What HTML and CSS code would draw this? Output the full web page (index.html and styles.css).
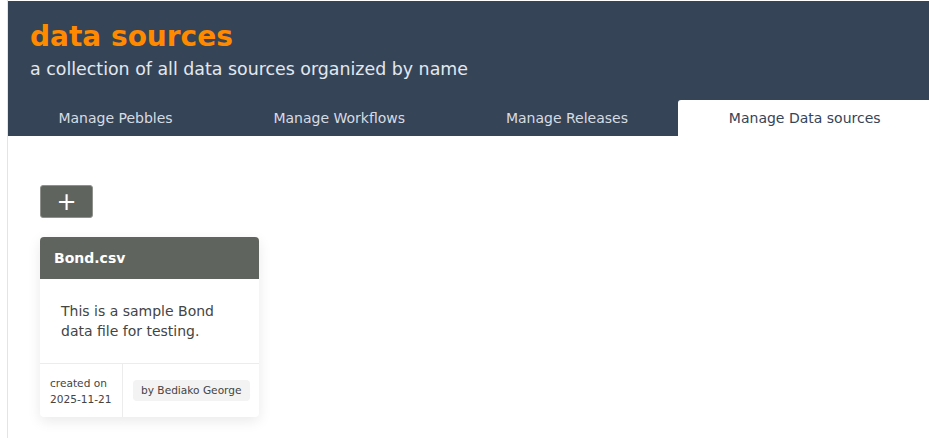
FILE: index.html
```html
<!DOCTYPE html>
<html lang="en">
<head>
    <meta charset="UTF-8">
    <meta name="viewport" content="width=device-width, initial-scale=1.0">
    <title>Data sources</title>
    <link rel="stylesheet" href="styles.css">
</head>
<body>
    <div class="page">
        <div class="header">
            <div class="header-text">
                <h1>data sources</h1>
                <p class="subtitle">a collection of all data sources organized by name</p>
            </div>
            <div class="tabs">
                <div class="tab">Manage Pebbles</div>
                <div class="tab">Manage Workflows</div>
                <div class="tab">Manage Releases</div>
                <div class="tab active">Manage Data sources</div>
            </div>
        </div>

        <div class="content">
            <button class="add-btn">+</button>

            <div class="card">
                <div class="card-title">Bond.csv</div>
                <div class="card-body">This is a sample Bond data file for testing.</div>
                <div class="card-footer">
                    <div class="created">created on<br>2025-11-21</div>
                    <div class="author"><span class="badge">by Bediako George</span></div>
                </div>
            </div>
        </div>
    </div>
</body>
</html>
```

FILE: styles.css
```css
body {
    margin: 0;
    font-family: "DejaVu Sans", Verdana, sans-serif;
    background: white;
    overflow: hidden;
}
.page {
    margin-left: 7px;
    border-left: 1px solid #e4e4e4;
    padding-top: 1px;
    min-height: 437px;
}
.header {
    background-color: #364457;
    margin-right: -2px;
}
.header-text {
    padding: 20px 22px 0;
    height: 79px;
}
h1 {
    margin: 0;
    color: #ff8a00;
    font-size: 28px;
    font-weight: bold;
    line-height: 32px;
}
.subtitle {
    margin: 5px 0 0;
    color: #e2e8ef;
    font-size: 17.4px;
    line-height: 22px;
}
.tabs {
    display: flex;
    height: 36px;
}
.tab {
    flex: 1 1 auto;
    text-align: center;
    font-size: 14px;
    line-height: 36px;
    color: #d6dce3;
}
.tab.active {
    background: white;
    color: #364457;
    border-radius: 3px 0 0 0;
}
.content {
    padding: 49px 32px 20px;
}
.add-btn {
    display: block;
    width: 53px;
    height: 33px;
    padding: 0;
    background-color: #60645e;
    border: 1px solid #8e918c;
    border-radius: 3px;
    color: white;
    font-family: "DejaVu Sans", sans-serif;
    font-size: 24px;
    line-height: 28px;
    cursor: pointer;
}
.card {
    margin-top: 19px;
    width: 219px;
    background: white;
    border-radius: 4px;
    box-shadow: 0 4px 14px rgba(0, 0, 0, 0.09);
}
.card-title {
    background-color: #60645e;
    color: white;
    font-weight: bold;
    font-size: 14px;
    height: 42px;
    line-height: 42px;
    padding-left: 14px;
    border-radius: 4px 4px 0 0;
}
.card-body {
    padding: 22px 20px 22px 21px;
    font-size: 14px;
    line-height: 20px;
    color: #444;
    border-bottom: 1px solid #ececec;
}
.card-footer {
    display: flex;
    height: 53px;
}
.created {
    width: 72px;
    padding: 11px 0 0 10px;
    font-size: 10.6px;
    line-height: 16px;
    color: #444;
    border-right: 1px solid #ececec;
}
.author {
    display: flex;
    align-items: center;
    padding-left: 10px;
}
.badge {
    background: #f3f3f3;
    border-radius: 4px;
    padding: 0 8px;
    height: 21px;
    line-height: 21px;
    font-size: 10.6px;
    color: #444;
}
```
